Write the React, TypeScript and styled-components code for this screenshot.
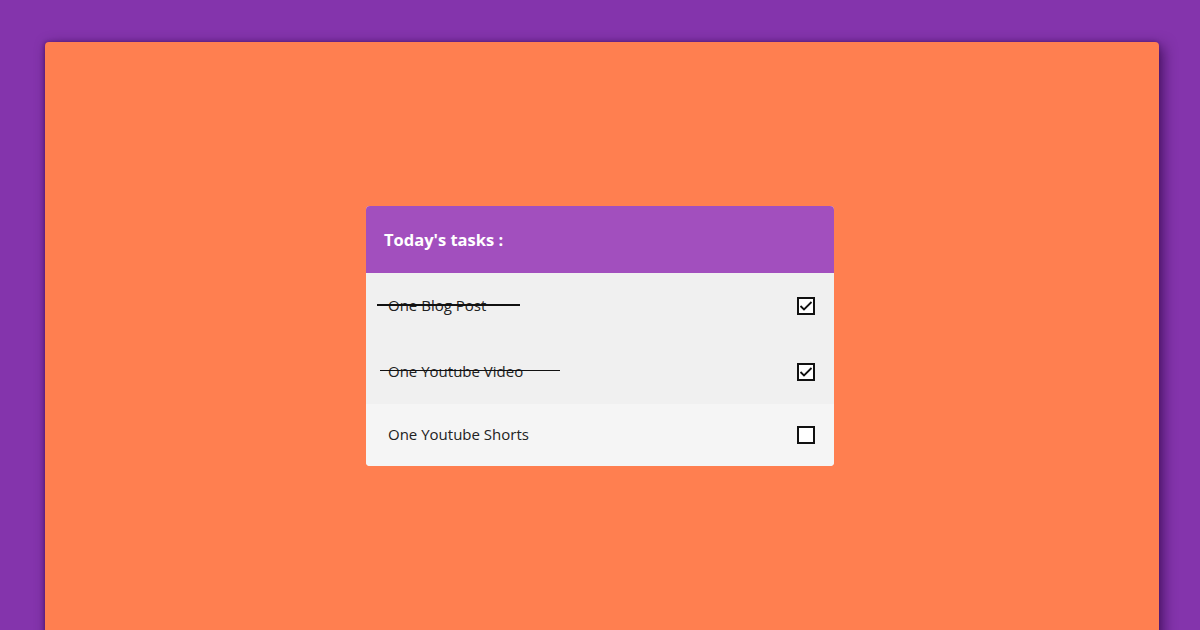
import React from "react";
import styled, { createGlobalStyle } from "styled-components";

const Global = createGlobalStyle`
  html, body { margin: 0; padding: 0; }
  body {
    background: #8434ac;
    font-family: "Open Sans", "Noto Sans", sans-serif;
    overflow: hidden;
  }
`;

const Page = styled.div`
  height: 630px;
  padding: 42px 41px 0 45px;
  box-sizing: border-box;
  overflow: hidden;
`;

const Panel = styled.main`
  height: 600px;
  background: #ff7f50;
  border-radius: 4px;
  box-shadow: 4px 4px 14px rgba(40, 0, 60, 0.65), -1px 0 4px rgba(40, 0, 60, 0.4);
  padding-top: 164px;
  box-sizing: border-box;
  display: flex;
  justify-content: center;
`;

const Card = styled.section`
  width: 468px;
  height: 260px;
  margin-left: -4px;
  border-radius: 4px;
  overflow: hidden;
  display: flex;
  flex-direction: column;
  background: #f5f5f5;
`;

const Header = styled.header`
  height: 67px;
  flex: none;
  background: #a24fbe;
  display: flex;
  align-items: center;
  padding-left: 18px;
  color: #fff;
  font-family: "Open Sans", sans-serif;
  font-weight: 700;
  font-size: 16.5px;
`;

const Row = styled.label<{ $h: number; $bg: string }>`
  height: ${(p) => p.$h}px;
  flex: none;
  background: ${(p) => p.$bg};
  display: flex;
  align-items: center;
  justify-content: space-between;
  padding: 0 19px 0 22px;
`;

const Text = styled.span<{ $done: boolean; $l: number; $r: number }>`
  position: relative;
  top: -1px;
  font-family: "Open Sans", sans-serif;
  font-size: 15px;
  color: #222;
  ${(p) =>
    p.$done
      ? `&::after {
    content: "";
    position: absolute;
    left: -${p.$l}px;
    right: -${p.$r}px;
    top: calc(50% - 1px);
    height: 1.5px;
    background: #111;
  }`
      : ""}
`;

const Box = styled.span`
  width: 18px;
  height: 18px;
  box-sizing: border-box;
  border: 2px solid #111;
  background: #fff;
  display: flex;
  align-items: center;
  justify-content: center;
`;

const Check = () => (
  <svg width="14" height="14" viewBox="0 0 14 14">
    <path d="M1.5 7 L5 10.5 L12.5 3" fill="none" stroke="#111" strokeWidth="1.8" />
  </svg>
);

const tasks = [
  { t: "One Blog Post", done: true, h: 66, bg: "#f0f0f0", l: 11, r: 34 },
  { t: "One Youtube Video", done: true, h: 65, bg: "#f0f0f0", l: 8, r: 37 },
  { t: "One Youtube Shorts", done: false, h: 62, bg: "#f5f5f5", l: 0, r: 0 },
];

export default function App() {
  return (
    <>
      <Global />
      <Page>
        <Panel>
          <Card>
            <Header>Today's tasks :</Header>
            {tasks.map((x) => (
              <Row key={x.t} $h={x.h} $bg={x.bg}>
                <Text $done={x.done} $l={x.l} $r={x.r}>
                  {x.t}
                </Text>
                <Box>{x.done && <Check />}</Box>
              </Row>
            ))}
          </Card>
        </Panel>
      </Page>
    </>
  );
}
